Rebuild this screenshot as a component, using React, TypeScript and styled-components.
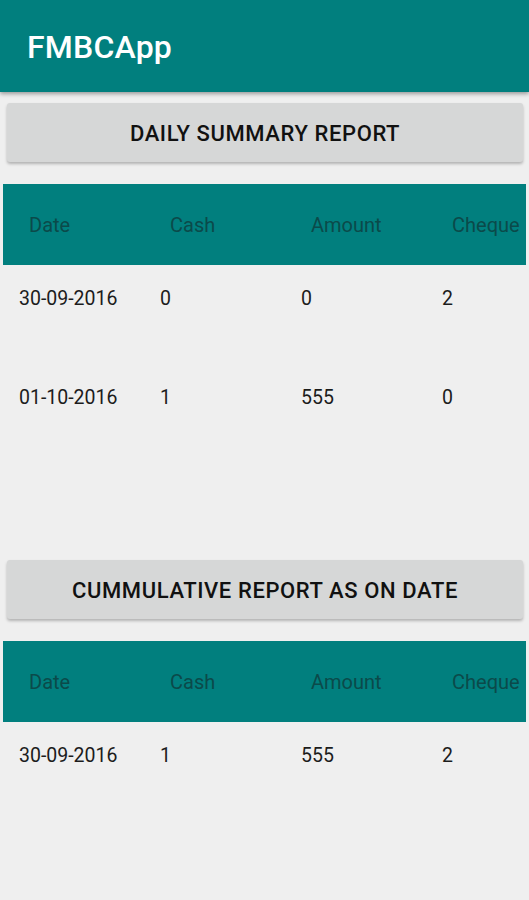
import React from "react";
import styled, { createGlobalStyle } from "styled-components";

const GlobalStyle = createGlobalStyle`
  html, body {
    margin: 0;
    padding: 0;
    background: #efefef;
    font-family: Roboto, "Noto Sans", sans-serif;
  }
`;

type Row = { date: string; cash: string; amount: string; cheque: string };

const dailyRows: Row[] = [
  { date: "30-09-2016", cash: "0", amount: "0", cheque: "2" },
  { date: "01-10-2016", cash: "1", amount: "555", cheque: "0" },
];

const cumulativeRows: Row[] = [
  { date: "30-09-2016", cash: "1", amount: "555", cheque: "2" },
];

const ReportTable = ({ rows }: { rows: Row[] }) => (
  <TableWrap>
    <HeaderRow>
      <HeaderCell>Date</HeaderCell>
      <HeaderCell>Cash</HeaderCell>
      <HeaderCell>Amount</HeaderCell>
      <HeaderCell>Cheque</HeaderCell>
    </HeaderRow>
    {rows.map((row) => (
      <BodyRow key={row.date}>
        <BodyCell>{row.date}</BodyCell>
        <BodyCell>{row.cash}</BodyCell>
        <BodyCell>{row.amount}</BodyCell>
        <BodyCell>{row.cheque}</BodyCell>
      </BodyRow>
    ))}
  </TableWrap>
);

const App = () => {
  return (
    <Screen>
      <GlobalStyle />
      <AppBar>
        <Title>FMBCApp</Title>
      </AppBar>
      <Content>
        <Section>
          <ReportButton>DAILY SUMMARY REPORT</ReportButton>
          <ReportTable rows={dailyRows} />
        </Section>
        <Section $offset={97}>
          <ReportButton>CUMMULATIVE REPORT AS ON DATE</ReportButton>
          <ReportTable rows={cumulativeRows} />
        </Section>
      </Content>
    </Screen>
  );
};

export default App;

const Screen = styled.div`
  width: 529px;
  height: 900px;
  background: #efefef;
  overflow: hidden;
`;

const AppBar = styled.header`
  height: 92px;
  background: #017f7e;
  display: flex;
  align-items: center;
  padding: 2px 0 0 27px;
  box-sizing: border-box;
  box-shadow: 0 2px 4px rgba(0, 0, 0, 0.35);
  position: relative;
  z-index: 1;
`;

const Title = styled.h1`
  margin: 0;
  color: #ffffff;
  font-size: 32px;
  font-weight: 500;
  letter-spacing: 0.2px;
`;

const Content = styled.main`
  display: flex;
  flex-direction: column;
`;

const Section = styled.section<{ $offset?: number }>`
  display: flex;
  flex-direction: column;
  margin-top: ${({ $offset }) => $offset ?? 11}px;
`;

const ReportButton = styled.button`
  margin: 0 6px 0 7px;
  height: 59px;
  padding: 2px 0 0;
  border: none;
  border-radius: 3px;
  background: #d6d7d7;
  box-shadow: 0 2px 3px rgba(0, 0, 0, 0.25);
  color: #111;
  font-family: Roboto, "Noto Sans", sans-serif;
  font-size: 22px;
  font-weight: 500;
  letter-spacing: 0.6px;
`;

const TableWrap = styled.div`
  margin: 22px 3px 0 3px;
  overflow: hidden;
`;

const HeaderRow = styled.div`
  height: 81px;
  background: #017f7e;
  display: grid;
  grid-template-columns: repeat(4, 141px);
  align-items: center;
`;

const HeaderCell = styled.div`
  padding-left: 26px;
  color: #0b4a4a;
  font-size: 20px;
  white-space: nowrap;
`;

const BodyRow = styled.div`
  height: 99px;
  display: grid;
  grid-template-columns: repeat(4, 141px);
  align-items: start;
`;

const BodyCell = styled.div`
  padding: 23px 0 0 16px;
  color: #1c1c1c;
  font-size: 19.5px;
  line-height: 22px;
  white-space: nowrap;
`;
